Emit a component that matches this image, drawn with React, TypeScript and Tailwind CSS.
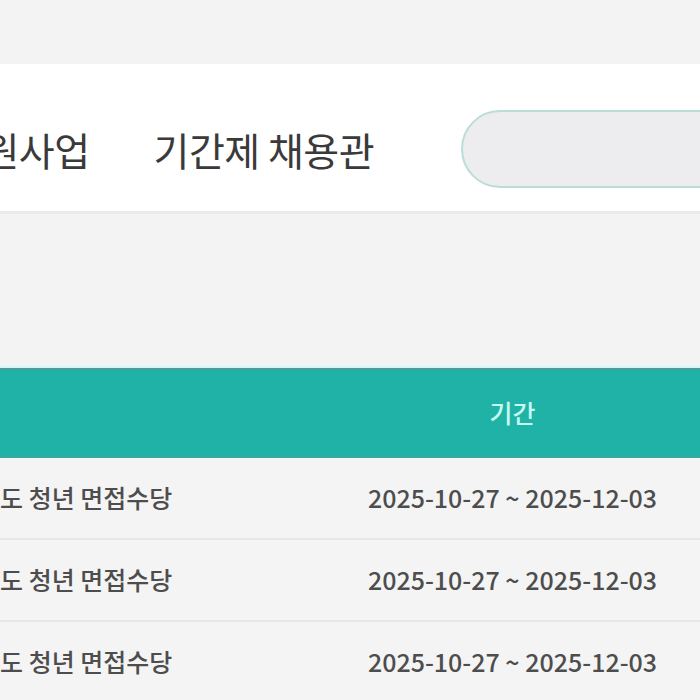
import React from 'react';

// 행 데이터
const rows = [
  { title: '도 청년 면접수당', period: '2025-10-27 ~ 2025-12-03' },
  { title: '도 청년 면접수당', period: '2025-10-27 ~ 2025-12-03' },
  { title: '도 청년 면접수당', period: '2025-10-27 ~ 2025-12-03' },
];

const font = { fontFamily: '"Noto Sans CJK KR", "Noto Sans", sans-serif' };

export default function App() {
  return (
    <div className="w-[700px] h-[700px] overflow-hidden bg-[#f3f3f3]" style={font}>
      {/* 상단 여백 */}
      <div className="h-[64px]" />

      {/* 상단 메뉴 */}
      <div className="bg-white border-b-[3px] border-[#ebebeb] h-[150px] pt-[46px] flex items-start overflow-hidden">
        <div className="flex items-center h-[78px] ml-[-52px] whitespace-nowrap">
          <span className="text-[39px] text-[#3a3a3a] tracking-[-0.5px]">지원사업</span>
          <span className="text-[39px] text-[#3a3a3a] ml-[64px] tracking-[-0.5px]">기간제 채용관</span>
          <div className="ml-[87px] w-[300px] h-[78px] shrink-0 rounded-full border-2 border-[#bcdcd8] bg-[#ededf0]" />
        </div>
      </div>

      <div className="h-[154px]" />

      {/* 표 */}
      <div className="shadow-[0_0_0_2px_#d2faf6]">
        <div className="grid grid-cols-[325px_375px] h-[90px] bg-[#20b2a6] border-t-2 border-[#4e9c97] border-b-2 border-b-[#3aa89e]">
          <div />
          <div className="flex items-center justify-center text-[25px] font-medium text-[#c4faf2]">기간</div>
        </div>
      </div>
      <div className="bg-[#f4f4f4]">
        {rows.map((row, i) => (
          <div key={i} className="grid grid-cols-[325px_375px] h-[82px] border-b-2 border-[#e7e7e7]">
            <div className="flex items-center text-[25px] font-medium text-[#4d4d4d] whitespace-nowrap">{row.title}</div>
            <div className="flex items-center justify-center text-[25px] font-medium text-[#4d4d4d]">{row.period}</div>
          </div>
        ))}
      </div>
    </div>
  );
}
